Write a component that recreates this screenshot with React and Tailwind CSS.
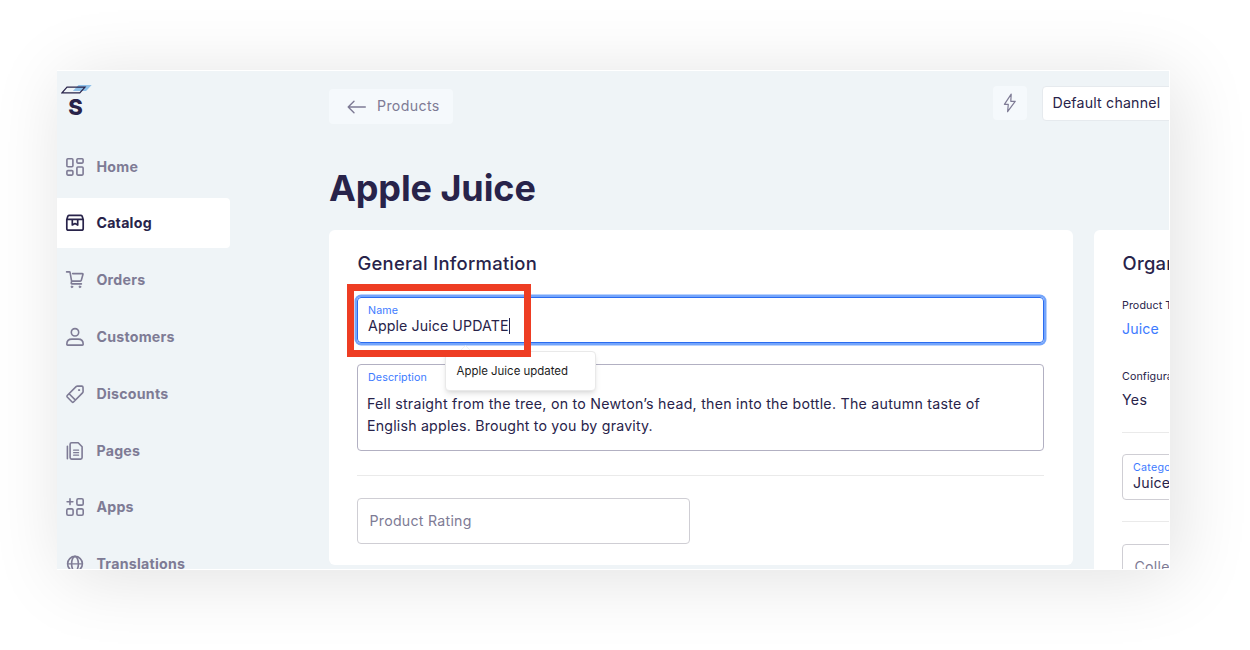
import React from "react";

const iconProps = {
  width: 20,
  height: 20,
  viewBox: "0 0 20 20",
  fill: "none",
  stroke: "currentColor",
  strokeWidth: 1.6,
  strokeLinecap: "round",
  strokeLinejoin: "round",
  className: "block shrink-0",
};

const HomeIcon = () => (
  <svg {...iconProps}>
    <rect x="1.9" y="1.7" width="6" height="8.1" rx="1" />
    <rect x="11.9" y="1.7" width="6.2" height="4.4" rx="1" />
    <rect x="1.9" y="13.6" width="6" height="4.5" rx="1" />
    <rect x="11.9" y="10" width="6.2" height="8.1" rx="1" />
  </svg>
);
const CatalogIcon = () => (
  <svg {...iconProps} strokeWidth="1.7">
    <path d="M1.8 6.4 2.9 3.1Q3.3 2.3 4.3 2.3h11.4q1 0 1.4.8l1.1 3.3v9q0 1.8-1.8 1.8H3.6q-1.8 0-1.8-1.8zM1.8 6.4h16.4M7.3 6.6v5.4L10 10.6l2.7 1.4V6.6" />
  </svg>
);
const OrdersIcon = () => (
  <svg {...iconProps}>
    <path d="M1.6 1.9h2.7q.7 0 .8.7l1.5 8.5h8.7q.8 0 1-.8l1.7-6q.1-.7-.6-.7H7.6M6.6 11.1l-.4 2.2q0 .6.6.6h9.6" />
    <circle cx="6.9" cy="16.8" r=".9" fill="currentColor" strokeWidth=".8" />
    <circle cx="14.9" cy="16.8" r=".9" fill="currentColor" strokeWidth=".8" />
  </svg>
);
const CustomersIcon = () => (
  <svg {...iconProps}>
    <circle cx="10" cy="5.3" r="3.7" />
    <path d="M1.8 17.2c0-3.3 2.3-5.1 5.1-5.1h6.2c2.8 0 5.1 1.8 5.1 5.1 0 .5-.4.9-.9.9H2.7c-.5 0-.9-.4-.9-.9z" />
  </svg>
);
const DiscountsIcon = () => (
  <svg {...iconProps}>
    <path d="m2.2 11.5 8.9-8.9q.6-.6 1.4-.6l4.3.1q1.1.1 1.2 1.2l.1 4.2q0 .8-.6 1.4L8.5 18q-.7.6-1.4 0L2.2 13q-.6-.8 0-1.5zM4.1 9.8l6.1 6.1" />
    <circle cx="14" cy="6.1" r=".6" fill="currentColor" strokeWidth="1" />
  </svg>
);
const PagesIcon = () => (
  <svg {...iconProps}>
    <path d="M2.4 5.3v12.4M6.6 1.8h6.6l3.9 4v10.8q0 1.5-1.5 1.5H6.6q-1.5 0-1.5-1.5V3.3q0-1.5 1.5-1.5z" />
    <path d="M8.6 9.2h5M8.6 11.7h5M8.6 14.2h5" strokeWidth="1.2" />
  </svg>
);
const AppsIcon = () => (
  <svg {...iconProps}>
    <path d="M5 1.8v5.8M2.1 4.7h5.8" />
    <rect x="11.9" y="1.8" width="6.3" height="6.3" rx="1.4" />
    <rect x="1.8" y="11.9" width="6.3" height="6.3" rx="1.4" />
    <rect x="11.9" y="11.9" width="6.3" height="6.3" rx="1.4" />
  </svg>
);
const TranslationsIcon = () => (
  <svg {...iconProps}>
    <circle cx="10" cy="9.8" r="7.4" />
    <ellipse cx="10" cy="9.8" rx="3.4" ry="7.4" />
    <path d="M2.8 9.9h14.4" strokeWidth="1.4" />
  </svg>
);

const NAV = [
  { label: "Home", Icon: HomeIcon },
  { label: "Catalog", Icon: CatalogIcon, active: true },
  { label: "Orders", Icon: OrdersIcon },
  { label: "Customers", Icon: CustomersIcon },
  { label: "Discounts", Icon: DiscountsIcon },
  { label: "Pages", Icon: PagesIcon },
  { label: "Apps", Icon: AppsIcon },
  { label: "Translations", Icon: TranslationsIcon },
];

function Logo() {
  return (
    <div className="flex h-[45px] w-[31px] flex-col items-center">
      <svg width="31" height="9" viewBox="0 0 31 9" className="block shrink-0">
        <path d="M17.5 0h13.2l-5.6 6H11.9z" fill="#8fc1ea" />
        <path d="M6 2.2h18l-5.2 5.6H1z" fill="none" stroke="#28234a" strokeWidth="1.2" />
      </svg>
      <span className="mt-[3px] -ml-[2px] text-[22px] leading-[20px] font-extrabold">S</span>
    </div>
  );
}

function Sidebar() {
  return (
    <aside className="flex w-[173px] shrink-0 flex-col">
      <div className="h-[70.7px] shrink-0 pt-[14px] pl-1">
        <Logo />
      </div>
      <nav className="flex shrink-0 flex-col gap-[6.8px]">
        {NAV.map(({ label, Icon, active }) => (
          <a
            key={label}
            className={
              active
                ? "flex h-[50px] items-center gap-[11.4px] rounded-r bg-white pl-2 text-[#28234a]"
                : "flex h-[50px] items-center gap-[11.4px] pl-2 text-[#7e7b95]"
            }
          >
            <Icon />
            <span className="text-[14.2px] leading-5 font-bold tracking-[0.25px]">{label}</span>
          </a>
        ))}
      </nav>
    </aside>
  );
}

function TopBar() {
  return (
    <header className="flex h-[35px] items-start">
      <button className="mt-[3px] flex h-[35px] w-[124px] items-center rounded bg-[#f5f9fc] pl-[18px] text-[#7e7b95]">
        <svg width="20" height="14" viewBox="0 0 20 14" fill="none" stroke="currentColor" strokeWidth="1.4" strokeLinecap="round" strokeLinejoin="round">
          <path d="M18.3 7H1.2M7 1.2 1.2 7 7 12.8" />
        </svg>
        <span className="-mt-[2px] ml-[10px] text-[14.2px] leading-5 tracking-[0.35px]">Products</span>
      </button>
      <button className="ml-[540px] flex h-[34px] w-[34px] shrink-0 items-center justify-center rounded bg-[#f5f9fc] text-[#7e7b95]">
        <svg width="14" height="20" viewBox="0 0 14 20" fill="none" stroke="currentColor" strokeWidth="1.2" strokeLinejoin="round">
          <path d="M8.2 1.2 1.4 11.3h3.9l-.7 7.4 7.6-10.4H7.8z" />
        </svg>
      </button>
      <div className="ml-[15px] h-[35px] w-[160px] shrink-0 rounded-sm border border-[#e6eaee] bg-white pl-[9.5px] text-[14.2px] leading-8 tracking-[0.18px] whitespace-nowrap">
        Default channel
      </div>
    </header>
  );
}

function GeneralCard() {
  return (
    <section className="h-[335px] w-[744px] shrink-0 rounded-md bg-white px-7 pt-[21px]">
      <h2 className="ml-[0.5px] text-[18.4px] leading-6 font-medium tracking-[0.28px]">General Information</h2>
      <div className="relative mt-[22px] h-[46px] w-[687px] rounded border border-[#2a6cf0] pt-[5px] pl-[10px] ring-[2.5px] ring-[#74a5fb]">
        <div className="text-[10.7px] leading-4 tracking-[0.15px] text-[#3d7bff]">Name</div>
        <div className="-mt-px flex items-center text-[14.2px] leading-4 tracking-[0.1px]">
          <span>Apple Juice UPDATE</span>
          <span className="h-4 w-px bg-[#28234a]" />
        </div>
        <div className="absolute -top-[14px] -left-[11px] z-20 h-[73px] w-[184px] border-[7px] border-[#ee3d23]" />
        <div className="absolute top-[53px] left-[87px] z-10 h-[40px] w-[151px] rounded border border-[#e9e9e9] bg-white pl-[10.5px] text-[11.45px] leading-[39px] text-[#1d1d1d] shadow-md">
          <svg width="13" height="8" viewBox="0 0 13 8" className="absolute -top-[7.5px] left-[12.5px]">
            <path d="M0 7 6.5 .5 13 7z" fill="#fff" stroke="#e4e4e4" strokeWidth=".5" />
          </svg>
          Apple Juice updated
        </div>
      </div>
      <div className="mt-[21px] h-[87px] w-[687px] rounded border border-[#b2b0c2] pt-[6px] pl-[9px]">
        <div className="pl-px text-[10.7px] leading-[14px] tracking-[0.1px] text-[#3d7bff]">Description</div>
        <p className="mt-[7.5px] text-[14.2px] leading-[22.7px] tracking-[0.255px] whitespace-nowrap">
          Fell straight from the tree, on to Newton’s head, then into the bottle. The autumn taste of
          <br />
          <span className="tracking-[0.2px]">English apples. Brought to you by gravity.</span>
        </p>
      </div>
      <div className="mt-[24px] h-px w-[687px] bg-[#eaeaea]" />
      <div className="mt-[22px] h-[46px] w-[333px] rounded border border-[#cfced4] pl-[11.5px] text-[14.2px] leading-[44px] tracking-[0.25px] text-[#7e7b95]">
        Product Rating
      </div>
    </section>
  );
}

function OrganizeCard() {
  return (
    <section className="h-[400px] w-[300px] shrink-0 rounded-md bg-white pt-[21px] pl-7 whitespace-nowrap">
      <h2 className="ml-[0.5px] text-[18.4px] leading-6 font-medium tracking-[0.28px]">Organize Product</h2>
      <div className="mt-[23px] text-[10.7px] leading-4 tracking-[0.1px]">Product Type</div>
      <div className="mt-[5px] text-[14.2px] leading-5 tracking-[0.1px] text-[#3d7bff]">Juice</div>
      <div className="mt-[30px] text-[10.7px] leading-4 tracking-[0.1px]">Configurable</div>
      <div className="mt-[5px] text-[14.2px] leading-5 tracking-[0.3px]">Yes</div>
      <div className="mt-[22px] h-px w-[244px] bg-[#eaeaea]" />
      <div className="mt-[21px] h-[46px] w-[244px] rounded border border-[#cfced4] pt-[5px] pl-[10px]">
        <div className="text-[10.7px] leading-[15px] tracking-[0.25px] text-[#3d7bff]">Category</div>
        <div className="text-[14.2px] leading-4 tracking-[0.2px]">Juices</div>
      </div>
      <div className="mt-[21px] h-px w-[244px] bg-[#eaeaea]" />
      <div className="mt-[22px] h-[47px] w-[244px] rounded border border-[#cfced4] pl-[11.5px] text-[14.2px] leading-[44px] tracking-[0.25px] text-[#7e7b95]">
        Collections
      </div>
    </section>
  );
}

export default function App() {
  return (
    <div className="h-[650px] w-[1250px] overflow-hidden bg-white pt-[70px] pl-[57px] font-['Inter',sans-serif] text-[#28234a]">
      <div className="flex h-[500px] w-[1113px] overflow-hidden border-t border-r border-b border-white bg-[#eff4f7] shadow-[7px_7px_70px_rgba(0,0,0,0.12)]">
        <Sidebar />
        <main className="ml-[99px] flex shrink-0 flex-col pt-[15px]">
          <TopBar />
          <h1 className="mt-[47px] text-[36px] leading-10 font-bold tracking-[-0.1px]">Apple Juice</h1>
          <div className="mt-[22px] flex gap-[21px]">
            <GeneralCard />
            <OrganizeCard />
          </div>
        </main>
      </div>
    </div>
  );
}
